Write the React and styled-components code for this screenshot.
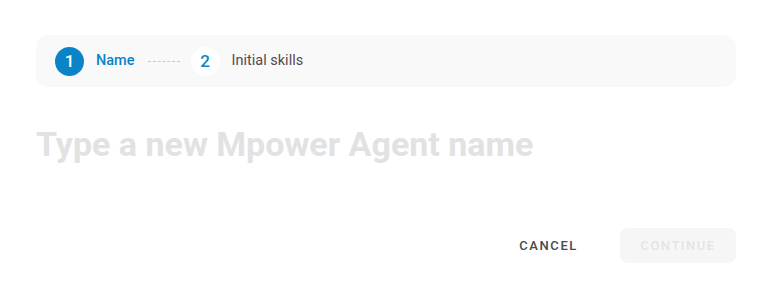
import React from "react";
import styled, { createGlobalStyle } from "styled-components";

const GlobalStyle = createGlobalStyle`
  body {
    margin: 0;
    background: #fff;
    font-family: Roboto, "Liberation Sans", sans-serif;
  }
`;

function App() {
  return (
    <>
      <GlobalStyle />
      <Page>
        <Stepper>
          <Step>
            <Circle $active>1</Circle>
            <StepLabel $active>Name</StepLabel>
          </Step>
          <Dashes />
          <Step>
            <Circle>2</Circle>
            <StepLabel>Initial skills</StepLabel>
          </Step>
        </Stepper>
        <NameInput placeholder="Type a new Mpower Agent name" />
        <Actions>
          <CancelBtn>Cancel</CancelBtn>
          <ContinueBtn disabled>Continue</ContinueBtn>
        </Actions>
      </Page>
    </>
  );
}

export default App;

let Page = styled.div`
  width: 700px;
  padding: 35px 0 0 36px;
  display: flex;
  flex-direction: column;
`;

let Stepper = styled.div`
  height: 52px;
  background-color: #f9f9f9;
  border-radius: 12px;
  display: flex;
  align-items: center;
  padding: 0 19px;
  box-sizing: border-box;
`;

let Step = styled.div`
  display: flex;
  align-items: center;
  gap: 12px;
`;

let Circle = styled.div`
  width: 29px;
  height: 29px;
  border-radius: 50%;
  display: flex;
  align-items: center;
  justify-content: center;
  font-size: 17px;
  font-weight: 500;
  background-color: ${(p) => (p.$active ? "#0a84c6" : "#fff")};
  color: ${(p) => (p.$active ? "#fff" : "#0a84c6")};
`;

let StepLabel = styled.span`
  font-size: 14.5px;
  margin-bottom: 2px;
  font-weight: ${(p) => (p.$active ? 500 : 400)};
  color: ${(p) => (p.$active ? "#0a84c6" : "#564a4c")};
`;

let Dashes = styled.div`
  width: 32px;
  margin: 1px 11px 0 13px;
  border-top: 1px dashed #c8c8c8;
`;

let NameInput = styled.input`
  margin-top: 36px;
  border: none;
  outline: none;
  padding: 0;
  background: transparent;
  font-family: Roboto, "Liberation Sans", sans-serif;
  font-size: 34px;
  font-weight: 700;
  height: 42px;
  color: #333;
  &::placeholder {
    color: #e2e2e2;
  }
`;

let Actions = styled.div`
  margin-top: 63px;
  display: flex;
  justify-content: flex-end;
  align-items: center;
  gap: 24px;
`;

let CancelBtn = styled.button`
  border: none;
  background: none;
  font-family: Roboto, "Liberation Sans", sans-serif;
  font-size: 13px;
  font-weight: 500;
  letter-spacing: 1.6px;
  text-transform: uppercase;
  color: #4a4a4a;
  padding: 0 18px;
  height: 35px;
`;

let ContinueBtn = styled.button`
  border: none;
  border-radius: 8px;
  background-color: #f6f6f6;
  font-family: Roboto, "Liberation Sans", sans-serif;
  font-size: 13px;
  font-weight: 500;
  letter-spacing: 1.5px;
  text-transform: uppercase;
  color: #e4e4e4;
  width: 116px;
  height: 35px;
`;
